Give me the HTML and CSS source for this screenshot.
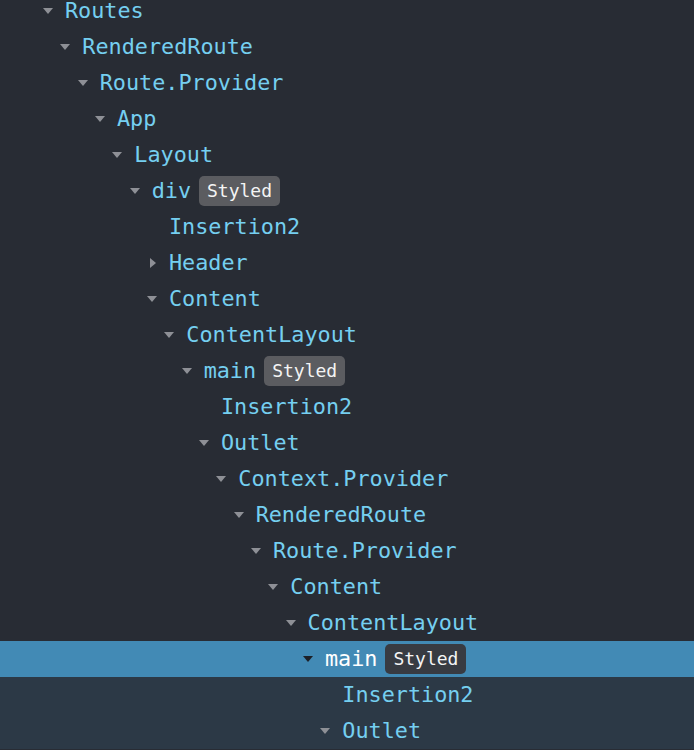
FILE: index.html
```html
<!DOCTYPE html>
<html lang="en">
<head>
    <meta charset="UTF-8">
    <meta name="viewport" content="width=device-width, initial-scale=1.0">
    <title>Components</title>
    <link rel="stylesheet" href="styles.css">
</head>
<body>
    <div class="tree">
        <div class="row" style="--depth:0"><span class="toggle open"></span><span class="name">Routes</span></div>
        <div class="row" style="--depth:1"><span class="toggle open"></span><span class="name">RenderedRoute</span></div>
        <div class="row" style="--depth:2"><span class="toggle open"></span><span class="name">Route.Provider</span></div>
        <div class="row" style="--depth:3"><span class="toggle open"></span><span class="name">App</span></div>
        <div class="row" style="--depth:4"><span class="toggle open"></span><span class="name">Layout</span></div>
        <div class="row" style="--depth:5"><span class="toggle open"></span><span class="name">div</span><span class="badge">Styled</span></div>
        <div class="row" style="--depth:6"><span class="toggle"></span><span class="name">Insertion2</span></div>
        <div class="row" style="--depth:6"><span class="toggle closed"></span><span class="name">Header</span></div>
        <div class="row" style="--depth:6"><span class="toggle open"></span><span class="name">Content</span></div>
        <div class="row" style="--depth:7"><span class="toggle open"></span><span class="name">ContentLayout</span></div>
        <div class="row" style="--depth:8"><span class="toggle open"></span><span class="name">main</span><span class="badge">Styled</span></div>
        <div class="row" style="--depth:9"><span class="toggle"></span><span class="name">Insertion2</span></div>
        <div class="row" style="--depth:9"><span class="toggle open"></span><span class="name">Outlet</span></div>
        <div class="row" style="--depth:10"><span class="toggle open"></span><span class="name">Context.Provider</span></div>
        <div class="row" style="--depth:11"><span class="toggle open"></span><span class="name">RenderedRoute</span></div>
        <div class="row" style="--depth:12"><span class="toggle open"></span><span class="name">Route.Provider</span></div>
        <div class="row" style="--depth:13"><span class="toggle open"></span><span class="name">Content</span></div>
        <div class="row" style="--depth:14"><span class="toggle open"></span><span class="name">ContentLayout</span></div>
        <div class="row selected" style="--depth:15"><span class="toggle open"></span><span class="name">main</span><span class="badge">Styled</span></div>
        <div class="row in-selected" style="--depth:16"><span class="toggle"></span><span class="name">Insertion2</span></div>
        <div class="row in-selected" style="--depth:16"><span class="toggle open"></span><span class="name">Outlet</span></div>
    </div>
</body>
</html>
```

FILE: styles.css
```css
* {
    margin: 0;
    padding: 0;
    box-sizing: border-box;
}

html, body {
    height: 100%;
}

body {
    font-family: 'DejaVu Sans Mono', monospace;
    background-color: #282c34;
    color: #75cff0;
    overflow: hidden;
}

.tree {
    margin-top: -7px;
}

.row {
    display: flex;
    align-items: center;
    height: 36px;
    padding-left: calc(43px + var(--depth) * 17.33px);
    font-size: 21.8px;
    white-space: nowrap;
}

.row.selected {
    background-color: #428ab5;
    color: #ffffff;
}

.row.in-selected {
    background-color: #2c3946;
}

/* Expand / collapse arrows */
.toggle {
    width: 11px;
    height: 11px;
    margin-right: 11px;
    flex-shrink: 0;
    position: relative;
}

.toggle.open::before,
.toggle.closed::before {
    content: '';
    position: absolute;
    width: 0;
    height: 0;
}

.toggle.open::before {
    left: 0;
    top: 2px;
    border-left: 5.5px solid transparent;
    border-right: 5.5px solid transparent;
    border-top: 6px solid #8e9096;
}

.toggle.closed::before {
    left: 3px;
    top: 0;
    border-top: 5.5px solid transparent;
    border-bottom: 5.5px solid transparent;
    border-left: 6px solid #8e9096;
}

.selected .toggle.open::before {
    border-top-color: #1d2027;
}

.name {
    line-height: 36px;
}

.badge {
    margin-left: 8px;
    padding: 0 8px;
    height: 30px;
    line-height: 30px;
    font-size: 18px;
    color: #f4f4f4;
    background-color: #5b5c60;
    border-radius: 5px;
}

.selected .badge {
    background-color: #383b42;
}
```
